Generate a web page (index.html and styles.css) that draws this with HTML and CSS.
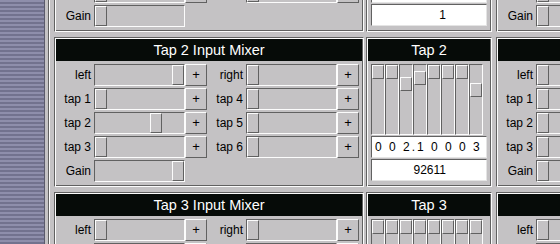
FILE: index.html
```html
<!DOCTYPE html>
<html>
<head>
<meta charset="utf-8">
<title>Tap Mixer</title>
<link rel="stylesheet" href="styles.css">
</head>
<body>
<div class="app">
  <aside class="stripes"></aside>
  <div class="view">
    <main class="canvas">
      <div class="scroller">

        <div class="tap-row">
          <section class="panel mixer">
            <h2 class="title">Tap 1 Input Mixer</h2>
            <div class="mix-grid">
              <span class="lbl">left</span><span class="trough"><i class="thumb"></i></span><span class="plus">+</span>
              <span class="lbl">right</span><span class="trough"><i class="thumb"></i></span><span class="plus">+</span>
              <span class="lbl">tap 1</span><span class="trough"><i class="thumb"></i></span><span class="plus">+</span>
              <span class="lbl">tap 4</span><span class="trough"><i class="thumb"></i></span><span class="plus">+</span>
              <span class="lbl">tap 2</span><span class="trough"><i class="thumb"></i></span><span class="plus">+</span>
              <span class="lbl">tap 5</span><span class="trough"><i class="thumb"></i></span><span class="plus">+</span>
              <span class="lbl">tap 3</span><span class="trough"><i class="thumb"></i></span><span class="plus">+</span>
              <span class="lbl">tap 6</span><span class="trough"><i class="thumb"></i></span><span class="plus">+</span>
              <span class="lbl">Gain</span><span class="trough"><i class="thumb"></i></span>
            </div>
          </section>
          <section class="panel tap">
            <h2 class="title">Tap 1</h2>
            <div class="tap-body">
              <div class="vsliders">
                <span class="vslider"><i class="vthumb"></i></span><span class="vslider"><i class="vthumb"></i></span><span class="vslider"><i class="vthumb"></i></span><span class="vslider"><i class="vthumb"></i></span><span class="vslider"><i class="vthumb"></i></span><span class="vslider"><i class="vthumb"></i></span><span class="vslider"><i class="vthumb"></i></span><span class="vslider"><i class="vthumb"></i></span>
              </div>
              <div class="readout values">0 0 0 0 0 0 0 0</div>
              <div class="readout count">1</div>
            </div>
          </section>
          <section class="panel mixer">
            <h2 class="title">Tap 1 Output Mixer</h2>
            <div class="mix-grid">
              <span class="lbl">left</span><span class="trough"><i class="thumb"></i></span><span class="plus">+</span>
              <span class="lbl">right</span><span class="trough"><i class="thumb"></i></span><span class="plus">+</span>
              <span class="lbl">tap 1</span><span class="trough"><i class="thumb"></i></span><span class="plus">+</span>
              <span class="lbl">tap 4</span><span class="trough"><i class="thumb"></i></span><span class="plus">+</span>
              <span class="lbl">tap 2</span><span class="trough"><i class="thumb"></i></span><span class="plus">+</span>
              <span class="lbl">tap 5</span><span class="trough"><i class="thumb"></i></span><span class="plus">+</span>
              <span class="lbl">tap 3</span><span class="trough"><i class="thumb"></i></span><span class="plus">+</span>
              <span class="lbl">tap 6</span><span class="trough"><i class="thumb"></i></span><span class="plus">+</span>
              <span class="lbl">Gain</span><span class="trough"><i class="thumb"></i></span>
            </div>
          </section>
        </div>

        <div class="tap-row">
          <section class="panel mixer">
            <h2 class="title">Tap 2 Input Mixer</h2>
            <div class="mix-grid">
              <span class="lbl">left</span><span class="trough"><i class="thumb" style="margin-left:77px"></i></span><span class="plus">+</span>
              <span class="lbl">right</span><span class="trough"><i class="thumb"></i></span><span class="plus">+</span>
              <span class="lbl">tap 1</span><span class="trough"><i class="thumb"></i></span><span class="plus">+</span>
              <span class="lbl">tap 4</span><span class="trough"><i class="thumb"></i></span><span class="plus">+</span>
              <span class="lbl">tap 2</span><span class="trough"><i class="thumb" style="margin-left:55px"></i></span><span class="plus">+</span>
              <span class="lbl">tap 5</span><span class="trough"><i class="thumb"></i></span><span class="plus">+</span>
              <span class="lbl">tap 3</span><span class="trough"><i class="thumb"></i></span><span class="plus">+</span>
              <span class="lbl">tap 6</span><span class="trough"><i class="thumb"></i></span><span class="plus">+</span>
              <span class="lbl">Gain</span><span class="trough"><i class="thumb" style="margin-left:77px"></i></span>
            </div>
          </section>
          <section class="panel tap">
            <h2 class="title">Tap 2</h2>
            <div class="tap-body">
              <div class="vsliders">
                <span class="vslider"><i class="vthumb"></i></span><span class="vslider"><i class="vthumb"></i></span><span class="vslider"><i class="vthumb" style="margin-top:12px"></i></span><span class="vslider"><i class="vthumb" style="margin-top:6px"></i></span><span class="vslider"><i class="vthumb"></i></span><span class="vslider"><i class="vthumb"></i></span><span class="vslider"><i class="vthumb"></i></span><span class="vslider"><i class="vthumb" style="margin-top:18px"></i></span>
              </div>
              <div class="readout values">0 0 2.1 0 0 0 3</div>
              <div class="readout count">92611</div>
            </div>
          </section>
          <section class="panel mixer">
            <h2 class="title">Tap 2 Output Mixer</h2>
            <div class="mix-grid">
              <span class="lbl">left</span><span class="trough"><i class="thumb"></i></span><span class="plus">+</span>
              <span class="lbl">right</span><span class="trough"><i class="thumb"></i></span><span class="plus">+</span>
              <span class="lbl">tap 1</span><span class="trough"><i class="thumb"></i></span><span class="plus">+</span>
              <span class="lbl">tap 4</span><span class="trough"><i class="thumb"></i></span><span class="plus">+</span>
              <span class="lbl">tap 2</span><span class="trough"><i class="thumb"></i></span><span class="plus">+</span>
              <span class="lbl">tap 5</span><span class="trough"><i class="thumb"></i></span><span class="plus">+</span>
              <span class="lbl">tap 3</span><span class="trough"><i class="thumb"></i></span><span class="plus">+</span>
              <span class="lbl">tap 6</span><span class="trough"><i class="thumb"></i></span><span class="plus">+</span>
              <span class="lbl">Gain</span><span class="trough"><i class="thumb"></i></span>
            </div>
          </section>
        </div>

        <div class="tap-row">
          <section class="panel mixer">
            <h2 class="title">Tap 3 Input Mixer</h2>
            <div class="mix-grid">
              <span class="lbl">left</span><span class="trough"><i class="thumb"></i></span><span class="plus">+</span>
              <span class="lbl">right</span><span class="trough"><i class="thumb"></i></span><span class="plus">+</span>
              <span class="lbl">tap 1</span><span class="trough"><i class="thumb"></i></span><span class="plus">+</span>
              <span class="lbl">tap 4</span><span class="trough"><i class="thumb"></i></span><span class="plus">+</span>
              <span class="lbl">tap 2</span><span class="trough"><i class="thumb"></i></span><span class="plus">+</span>
              <span class="lbl">tap 5</span><span class="trough"><i class="thumb"></i></span><span class="plus">+</span>
              <span class="lbl">tap 3</span><span class="trough"><i class="thumb"></i></span><span class="plus">+</span>
              <span class="lbl">tap 6</span><span class="trough"><i class="thumb"></i></span><span class="plus">+</span>
              <span class="lbl">Gain</span><span class="trough"><i class="thumb"></i></span>
            </div>
          </section>
          <section class="panel tap">
            <h2 class="title">Tap 3</h2>
            <div class="tap-body">
              <div class="vsliders">
                <span class="vslider"><i class="vthumb"></i></span><span class="vslider"><i class="vthumb"></i></span><span class="vslider"><i class="vthumb"></i></span><span class="vslider"><i class="vthumb"></i></span><span class="vslider"><i class="vthumb"></i></span><span class="vslider"><i class="vthumb"></i></span><span class="vslider"><i class="vthumb"></i></span><span class="vslider"><i class="vthumb"></i></span>
              </div>
              <div class="readout values">0 0 0 0 0 0 0 0</div>
              <div class="readout count">1</div>
            </div>
          </section>
          <section class="panel mixer">
            <h2 class="title">Tap 3 Output Mixer</h2>
            <div class="mix-grid">
              <span class="lbl">left</span><span class="trough"><i class="thumb"></i></span><span class="plus">+</span>
              <span class="lbl">right</span><span class="trough"><i class="thumb"></i></span><span class="plus">+</span>
              <span class="lbl">tap 1</span><span class="trough"><i class="thumb"></i></span><span class="plus">+</span>
              <span class="lbl">tap 4</span><span class="trough"><i class="thumb"></i></span><span class="plus">+</span>
              <span class="lbl">tap 2</span><span class="trough"><i class="thumb"></i></span><span class="plus">+</span>
              <span class="lbl">tap 5</span><span class="trough"><i class="thumb"></i></span><span class="plus">+</span>
              <span class="lbl">tap 3</span><span class="trough"><i class="thumb"></i></span><span class="plus">+</span>
              <span class="lbl">tap 6</span><span class="trough"><i class="thumb"></i></span><span class="plus">+</span>
              <span class="lbl">Gain</span><span class="trough"><i class="thumb"></i></span>
            </div>
          </section>
        </div>

      </div>
    </main>
  </div>
</div>
</body>
</html>
```
FILE: styles.css
```css
* { box-sizing: border-box; }

html, body {
  margin: 0;
  height: 100%;
  overflow: hidden;
}

body {
  background: #c4c2c4;
  color: #000;
  font-family: "Liberation Sans", Arial, sans-serif;
  font-size: 12px;
}

.app {
  display: flex;
  height: 100vh;
}

.stripes {
  flex: none;
  width: 45px;
  border-right: 1px solid #5a5a6c;
  background: repeating-linear-gradient(to bottom, #8e8eab 0 2px, #72728e 2px 4px);
}

.view {
  flex: 1;
  min-width: 0;
  padding-left: 3px;
  overflow: hidden;
}

.canvas {
  height: 100%;
  border-left: 1px solid #616161;
  box-shadow: inset 1px 0 0 #fcfcfc;
  padding-left: 5px;
  overflow: hidden;
}

/* content scrolled so that the Tap 1 row is mostly above the viewport */
.scroller {
  display: flex;
  flex-direction: column;
  gap: 5px;
  margin-top: -118px;
}

.tap-row {
  display: flex;
  gap: 2px;
  flex: none;
}

.panel {
  flex: none;
  height: 150px;
  padding: 1px;
  border: 1px solid;
  border-color: #616161 #fcfcfc #fcfcfc #616161;
  box-shadow: inset 1px 1px 0 #fcfcfc, inset -1px -1px 0 #616161;
}

.mixer { width: 310px; }

.tap {
  width: 126px;
  margin-right: 2px;
}

.title {
  margin: 0;
  height: 22px;
  line-height: 22px;
  background: #060b08;
  color: #fff;
  font-size: 14.5px;
  font-weight: normal;
  text-align: center;
  white-space: nowrap;
  overflow: hidden;
}

.mix-grid {
  display: grid;
  grid-template-columns: 38px 91px 22px 39px 91px 22px;
  grid-auto-rows: 22px;
  row-gap: 2px;
  padding: 3px 3px 0 0;
}

.lbl {
  text-align: right;
  padding-right: 3px;
  line-height: 22px;
  white-space: nowrap;
}

.trough {
  display: block;
  border: 1px solid;
  border-color: #616161 #fcfcfc #fcfcfc #616161;
}

.thumb {
  display: block;
  width: 12px;
  height: 20px;
  border: 1px solid;
  border-color: #fcfcfc #616161 #616161 #fcfcfc;
}

.plus {
  display: block;
  border: 1px solid;
  border-color: #fcfcfc #616161 #616161 #fcfcfc;
  text-align: center;
  line-height: 19px;
  font-size: 13px;
}

.tap-body {
  display: flex;
  flex-direction: column;
  gap: 1px;
  padding: 3px 3px 0;
}

.vsliders {
  display: flex;
  height: 71px;
}

.vslider {
  display: block;
  width: 14px;
  border: 1px solid;
  border-color: #616161 #fcfcfc #fcfcfc #616161;
}

.vthumb {
  display: block;
  width: 12px;
  height: 14px;
  border: 1px solid;
  border-color: #fcfcfc #616161 #616161 #fcfcfc;
}

.readout {
  height: 22px;
  background: #fff;
  border: 1px solid;
  border-color: #616161 #e4e4e4 #e4e4e4 #616161;
  line-height: 20px;
  white-space: pre;
  overflow: hidden;
}

.values {
  letter-spacing: 2px;
  padding-left: 3px;
}

.count {
  text-align: right;
  padding-right: 40px;
}
```
